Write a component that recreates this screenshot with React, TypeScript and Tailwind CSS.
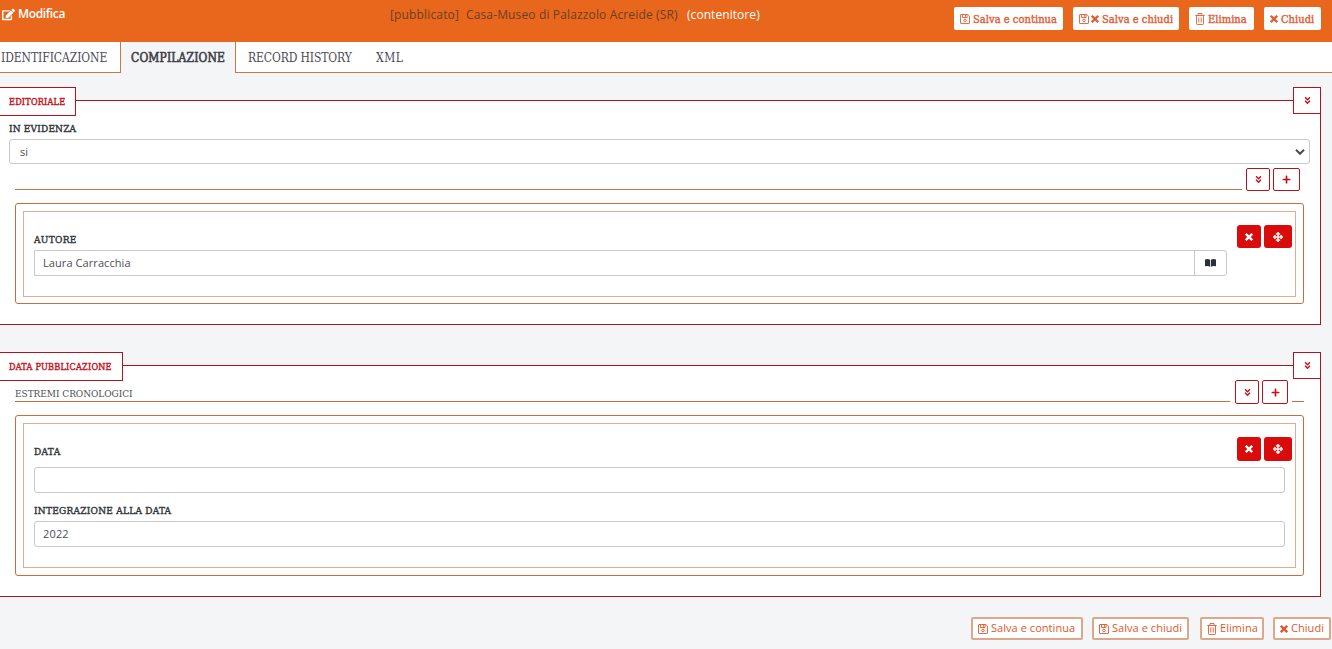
import type { ReactNode } from "react";
import { FaAngleDoubleDown, FaArrowsAlt, FaEdit, FaPlus } from "react-icons/fa";

const slab = "font-['DejaVu_Serif_Condensed','DejaVu_Serif',serif]";
const slabBold = "font-['DejaVu_Serif_Condensed','DejaVu_Serif',serif] [-webkit-text-stroke:0.4px_currentColor]";

function SaveIcon() {
  return (
    <svg viewBox="0 0 10 10" className="h-[10px] w-[10px] shrink-0" fill="none" stroke="currentColor" strokeWidth=".9">
      <path d="M1 .5h6.8l1.7 1.7V9a.5.5 0 0 1-.5.5H1A.5.5 0 0 1 .5 9V1A.5.5 0 0 1 1 .5Z" />
      <path d="M2.5.5v3h4.6v-3M5.5 1v1.8" />
      <circle cx="5" cy="6.5" r="1.3" />
    </svg>
  );
}

function TrashIcon() {
  return (
    <svg viewBox="0 0 10 12" className="h-[12px] w-[10px] shrink-0" fill="none" stroke="currentColor" strokeWidth=".9">
      <path d="M.3 2.5h9.4M3 2.5v-2h4v2M1.5 2.5v8.2a.8.8 0 0 0 .8.8h5.4a.8.8 0 0 0 .8-.8V2.5M3.8 4.5v5M6.2 4.5v5" />
    </svg>
  );
}

function CrossIcon() {
  return (
    <svg viewBox="0 0 8 8" className="h-[8px] w-[8px] shrink-0" fill="none" stroke="currentColor" strokeWidth="2.3">
      <path d="m.8.8 6.4 6.4M7.2.8.8 7.2" />
    </svg>
  );
}

function BookIcon() {
  return (
    <svg viewBox="0 0 11 8" className="h-[8px] w-[11px]" fill="currentColor">
      <path d="M0 .5Q3-.4 5.1.8v7Q3 6.7 0 7.3ZM5.9.8Q8-.4 11 .5v6.8Q8 6.7 5.9 7.8Z" />
    </svg>
  );
}

function HeadButton({ className, icon, children }: { className: string; icon: ReactNode; children: ReactNode }) {
  return (
    <button className={`flex h-[23px] items-center gap-[2px] whitespace-nowrap rounded-[2px] bg-white pl-[6px] pt-px text-[11px] text-[#dc6038] ${slabBold} ${className}`}>
      {icon}
      <span className="pl-px pt-[2px] tracking-[0.05px]">{children}</span>
    </button>
  );
}

function FootButton({ className, children }: { className: string; children: ReactNode }) {
  return (
    <button className={`flex h-[23px] items-center gap-[3px] whitespace-nowrap rounded-[2px] border-2 border-[#dfa78a] bg-white pl-[5px] text-[11px] tracking-[0.05px] text-[#dc5a2c] ${className}`}>
      {children}
    </button>
  );
}

function OutlineButton({ className, children }: { className: string; children: ReactNode }) {
  return (
    <button className={`flex items-center justify-center rounded-[2px] border border-[#b3141b] bg-white text-[#cc0d18] ${className}`}>
      {children}
    </button>
  );
}

function RowTools({ className }: { className: string }) {
  return (
    <div className={`flex gap-[3px] text-white ${className}`}>
      <button className="flex w-6 items-center justify-center rounded-[3px] bg-[#d90b0b] pr-px"><CrossIcon /></button>
      <button className="flex w-7 items-center justify-center rounded-[3px] bg-[#d90b0b]">
        <FaArrowsAlt size={10} stroke="currentColor" strokeWidth={24} />
      </button>
    </div>
  );
}

function Section({ title, legendClass, bodyClass, children }: { title: string; legendClass: string; bodyClass: string; children: ReactNode }) {
  return (
    <section className="w-[1321px]">
      <div className="flex h-[27px]">
        <h2 className={`z-10 flex h-[29px] shrink-0 items-center whitespace-nowrap border border-l-0 border-[#b3141b] bg-white pl-[9px] pt-[2px] text-[9px] text-[#c4141e] ${slabBold} ${legendClass}`}>
          {title}
        </h2>
        <div className="mt-[13px] flex-1 border-t border-[#b3141b] bg-white" />
        <button className="flex w-[28px] items-center justify-center border border-[#b3141b] bg-white pl-px text-[#cc0d18]">
          <FaAngleDoubleDown size={9} />
        </button>
      </div>
      <div className={`border-b border-r border-[#b3141b] bg-white ${bodyClass}`}>{children}</div>
    </section>
  );
}

function Label({ className, children }: { className: string; children: ReactNode }) {
  return <label className={`block h-4 whitespace-nowrap text-[10px] leading-[18px] text-[#33363c] ${slabBold} ${className}`}>{children}</label>;
}

export default function App() {
  return (
    <div className="h-[649px] w-[1332px] overflow-hidden bg-[#f4f5f7] font-['Open_Sans',sans-serif] text-[11px] text-[#4b4e55]">
      <header className="flex h-[42px] items-start bg-[#e9671c]">
        <div className="flex w-[389px] items-center gap-[3px] pl-[2px] pt-[6px] text-[12px] font-semibold leading-4 tracking-[-0.35px] text-white">
          <FaEdit size={13} />
          Modifica
        </div>
        <div className="flex flex-1 whitespace-pre pl-px pt-[7px] text-[12px] leading-4 text-[#684026]">
          <span className="w-[76px] tracking-[0.15px]">[pubblicato]</span>
          <span className="w-[221px] tracking-[0.14px]">Casa-Museo di Palazzolo Acreide (SR)</span>
          <span className="tracking-[0.06px] text-white">(contenitore)</span>
        </div>
        <div className="flex gap-[10px] pr-[11px] pt-[7px]">
          <HeadButton className="w-[109px]" icon={<SaveIcon />}>Salva e continua</HeadButton>
          <HeadButton className="w-[106px]" icon={<><SaveIcon /><CrossIcon /></>}>Salva e chiudi</HeadButton>
          <HeadButton className="w-[65px]" icon={<TrashIcon />}>Elimina</HeadButton>
          <HeadButton className="w-[57px]" icon={<CrossIcon />}>Chiudi</HeadButton>
        </div>
      </header>

      <nav className={`flex h-[31px] whitespace-nowrap bg-white text-[12px] leading-[33px] text-[#4d4b55] ${slab}`}>
        <a className="w-[120px] border-b border-[#c87850] pl-[1px] tracking-[-0.08px]">IDENTIFICAZIONE</a>
        <a className="w-[116px] border-x border-[#c87850] bg-[#f4f5f7] pl-[10px] tracking-[0.12px] text-[#3d3f47] [-webkit-text-stroke:0.55px_currentColor]">COMPILAZIONE</a>
        <a className="w-[140px] border-b border-[#c87850] pl-[12px] tracking-[-0.12px]">RECORD HISTORY</a>
        <a className="flex-1 border-b border-[#c87850] tracking-[0.5px]">XML</a>
      </nav>

      <main className="pt-[14px]">
        <Section title="EDITORIALE" legendClass="w-[76px] tracking-[0.22px]" bodyClass="h-[211px] pt-[6px]">
          <Label className="ml-[9px] tracking-[0.18px]">IN EVIDENZA</Label>
          <div className="ml-[9px] mt-[3px] flex h-[25px] w-[1301px] items-center justify-between rounded-[3px] border border-[#c8c8ca] pl-[10px] pr-[4px]">
            <span className="pt-px">si</span>
            <svg viewBox="0 0 10 6" className="h-[6px] w-[10px]" fill="none" stroke="#4b4b4f" strokeWidth="2"><path d="m1 .8 4 4 4-4" /></svg>
          </div>
          <div className="ml-[15px] mt-[4px] flex h-[23px]">
            <div className="mr-[4px] h-[22px] w-[1227px] border-b border-[#c07a50]" />
            <OutlineButton className="mr-[3px] w-6"><FaAngleDoubleDown size={9} /></OutlineButton>
            <OutlineButton className="w-[27px]"><FaPlus size={9} /></OutlineButton>
          </div>
          <div className="ml-[15px] mt-[12px] h-[101px] w-[1289px] rounded-[3px] border border-[#c46f42] p-[7px]">
            <div className="flex h-[86px] border border-[#e2ae93] pl-[10px]">
              <div className="w-[1203px] pt-[19px]">
                <Label className="tracking-[0.3px]">AUTORE</Label>
                <div className="mt-[3px] flex h-[26px] w-[1193px] rounded-r-[3px] border border-[#c8c8ca]">
                  <div className="w-[1159px] pl-[8px] leading-6 tracking-[0.08px]">Laura Carracchia</div>
                  <div className="flex flex-1 items-center justify-center border-l border-[#c8c8ca] text-[#2b2f38]"><BookIcon /></div>
                </div>
              </div>
              <RowTools className="mt-[13px] h-[23px]" />
            </div>
          </div>
        </Section>

        <div className="h-[27px]" />

        <Section title="DATA PUBBLICAZIONE" legendClass="w-[123px] tracking-[0.25px]" bodyClass="h-[218px] pt-[1px]">
          <div className="ml-[15px] flex h-6">
            <div className={`mr-[5px] h-[22px] w-[1215px] border-b border-[#c46f42] pt-[5px] text-[10px] leading-[18px] tracking-[-0.05px] ${slab}`}>ESTREMI CRONOLOGICI</div>
            <OutlineButton className="mr-[3px] w-6"><FaAngleDoubleDown size={9} /></OutlineButton>
            <OutlineButton className="mr-[4px] w-[26px]"><FaPlus size={9} /></OutlineButton>
            <div className="h-[22px] w-[12px] border-b border-[#c46f42]" />
          </div>
          <div className="ml-[15px] mt-[11px] h-[161px] w-[1289px] rounded-[3px] border border-[#c46f42] p-[7px]">
            <div className="h-[145px] border border-[#e2ae93] pl-[10px] pt-[13px]">
              <div className="flex h-6">
                <Label className="w-[1203px] pt-[6px] tracking-[0.35px]">DATA</Label>
                <RowTools className="h-6" />
              </div>
              <div className="mt-[6px] h-[26px] w-[1251px] rounded-[3px] border border-[#c8c8ca]" />
              <Label className="mt-[9px] tracking-[0.25px]">INTEGRAZIONE ALLA DATA</Label>
              <div className="mt-[3px] h-[26px] w-[1251px] rounded-[3px] border border-[#c8c8ca] pl-[8px] leading-6 tracking-[0.15px]">2022</div>
            </div>
          </div>
        </Section>
      </main>

      <footer className="flex justify-end pr-px pt-[20px]">
        <FootButton className="mr-[9px] w-[112px]"><SaveIcon />Salva e continua</FootButton>
        <FootButton className="mr-[11px] w-[97px]"><SaveIcon />Salva e chiudi</FootButton>
        <FootButton className="mr-[9px] w-[64px]"><TrashIcon />Elimina</FootButton>
        <FootButton className="w-[58px]"><CrossIcon />Chiudi</FootButton>
      </footer>
    </div>
  );
}
